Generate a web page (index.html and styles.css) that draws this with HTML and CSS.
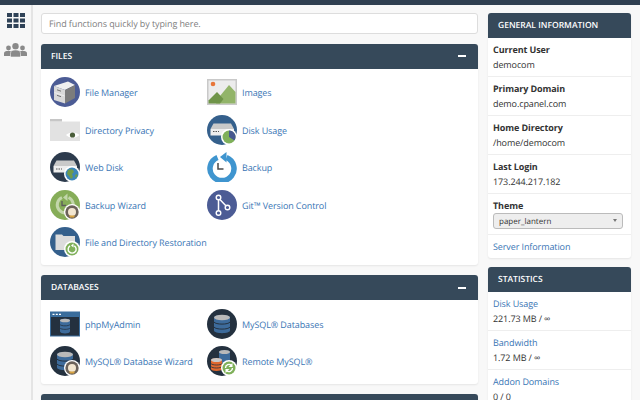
FILE: index.html
```html
<!DOCTYPE html>
<html>
<head>
    <title>cPanel</title>
    <link rel="stylesheet" href="styles.css">
</head>
<body>
    <div class="top-bar"></div>
    <div class="page">
        <div class="side-nav">
            <svg class="nav-icon" width="18" height="15" viewBox="0 0 18 15" fill="#2f4257">
                <rect x="0" y="0" width="5" height="4"/><rect x="6.5" y="0" width="5" height="4"/><rect x="13" y="0" width="5" height="4"/>
                <rect x="0" y="5.5" width="5" height="4"/><rect x="6.5" y="5.5" width="5" height="4"/><rect x="13" y="5.5" width="5" height="4"/>
                <rect x="0" y="11" width="5" height="4"/><rect x="6.5" y="11" width="5" height="4"/><rect x="13" y="11" width="5" height="4"/>
            </svg>
            <svg class="nav-icon" width="23" height="14" viewBox="0 0 23 14" fill="#8a8a8a">
                <circle cx="4.5" cy="5" r="2.4"/><circle cx="18.5" cy="5" r="2.4"/>
                <path d="M0 13v-2.5C0 8.5 1.5 8 4.5 8S9 8.5 9 10.5V13zM14 13v-2.500C14 8.500 15.500 8 18.500 8S23 8.500 23 10.500V13z"/>
                <circle cx="11.500" cy="3.200" r="3.200"/>
                <path d="M6.500 14v-3.500C6.500 7.500 8.500 7 11.500 7s5 .5 5 3.500V14z" stroke="#f7f7f7" stroke-width=".6"/>
            </svg>
        </div>
        <div class="content">
            <div class="main-col">
                <div class="search-box">Find functions quickly by typing here.</div>

                <div class="panel">
                    <div class="panel-header">
                        <span>FILES</span>
                        <span class="collapse-mark"></span>
                    </div>
                    <div class="item-grid">
                        <a class="item">
                            <svg class="icon" viewBox="0 0 30 30">
                                <circle cx="15" cy="15" r="15" fill="#4c5c95"/>
                                <path d="M4 9 18 4.500l7 3.500-10 5z" fill="#f0f0f0"/>
                                <path d="M4 9l11 4v13.500L4 23z" fill="#d9d9d9"/>
                                <path d="M15 13l10-5v13l-10 5.500z" fill="#7c7c7c"/>
                                <path d="M4.500 15.500l10 3.500" stroke="#f4f4f4" stroke-width=".8"/>
                                <path d="M7 12.800l4 1.400M7 18.300l4 1.400" stroke="#666" stroke-width=".9"/>
                            </svg>
                            <span class="item-label">File Manager</span>
                        </a>
                        <a class="item">
                            <svg class="icon" viewBox="0 0 30 30">
                                <rect width="30" height="26" y="2" fill="#c9c9c9"/>
                                <rect x="1.500" y="3.500" width="27" height="23" fill="#ececec"/>
                                <circle cx="6" cy="7" r="2.300" fill="#e8763a"/>
                                <path d="M9 26.500H28.500V15L22 8l-9 11z" fill="#92b469"/>
                                <path d="M1.500 26.500v-3L10 15l6.500 7-3.500 4.500z" fill="#6f9449"/>
                            </svg>
                            <span class="item-label">Images</span>
                        </a>
                        <a class="item">
                            <svg class="icon" viewBox="0 0 30 30">
                                <path d="M0 6.500H30V26H0z" fill="#e2e2e2"/>
                                <path d="M0 4H12V6.500H0z" fill="#c6c6c6"/>
                                <path d="M16 20c3-3.400 10.500-3.400 13.500 0-3 3.400-10.500 3.400-13.500 0z" fill="#fff"/>
                                <circle cx="22.500" cy="20" r="2.600" fill="#4a5d3a"/>
                            </svg>
                            <span class="item-label">Directory Privacy</span>
                        </a>
                        <a class="item">
                            <svg class="icon" viewBox="0 0 30 30">
                                <circle cx="15" cy="15" r="15" fill="#35608c"/>
                                <path d="M6.500 8.500H24L27 14H3.500z" fill="#c9c9c9"/>
                                <rect x="3.500" y="14" width="23.500" height="6.500" fill="#eee"/>
                                <path d="M6 16.500h6" stroke="#555" stroke-width="1.200" stroke-dasharray="1.500 1"/>
                                <circle cx="22" cy="22" r="8" fill="#fff"/>
                                <circle cx="22" cy="22" r="6.500" fill="#7fb05a"/>
                                <path d="M22 22v-6.500a6.500 6.500 0 0 1 5.500 10z" fill="#46598f"/>
                            </svg>
                            <span class="item-label">Disk Usage</span>
                        </a>
                        <a class="item">
                            <svg class="icon" viewBox="0 0 30 30">
                                <circle cx="15" cy="15" r="15" fill="#2d3b4d"/>
                                <path d="M6.500 8.500H24L27 14H3.500z" fill="#c9c9c9"/>
                                <rect x="3.500" y="14" width="23.500" height="6.500" fill="#eee"/>
                                <path d="M6 17h6" stroke="#555" stroke-width="1.200" stroke-dasharray="1.500 1"/>
                                <circle cx="22" cy="22" r="8" fill="#fff"/>
                                <circle cx="22" cy="22" r="6.500" fill="#3c86b8"/>
                                <path d="M18 18c2-1 4-1 5 0l1 2-2 2 1 3-2 2-2-3-2-2z" fill="#6f9a4a"/>
                                <path d="M25 23l2-1 .5 2-2 2z" fill="#6f9a4a"/>
                            </svg>
                            <span class="item-label">Web Disk</span>
                        </a>
                        <a class="item">
                            <svg class="icon" viewBox="0 0 30 30">
                                <path d="M10.500 5.500A12 12 0 1 0 19.500 5.500" fill="none" stroke="#3f95cf" stroke-width="5.500"/>
                                <path d="M19.500 0v10.500l-6.500-5.500z" fill="#3f95cf"/>
                                <path d="M11 11v6h5.500" fill="none" stroke="#4a4a4a" stroke-width="1.500"/>
                            </svg>
                            <span class="item-label">Backup</span>
                        </a>
                        <a class="item">
                            <svg class="icon" viewBox="0 0 30 30">
                                <circle cx="15" cy="15" r="15" fill="#86ad58"/>
                                <path d="M12 7.500a8 8 0 1 0 6.500 0" fill="none" stroke="#c2d6aa" stroke-width="3"/>
                                <path d="M17.500 3.500v7.500l-4.500-3.500z" fill="#c2d6aa"/>
                                <path d="M12 11v4.500h4" fill="none" stroke="#5b5b5b" stroke-width="1.300"/>
                                <circle cx="22" cy="22" r="8" fill="#fff"/>
                                <circle cx="22" cy="22" r="6.700" fill="#6b625a"/>
                                <circle cx="22" cy="22" r="4" fill="#f2e6d0"/>
                                <path d="M19 25.500h6l-1 2h-4z" fill="#d9a441"/>
                            </svg>
                            <span class="item-label">Backup Wizard</span>
                        </a>
                        <a class="item">
                            <svg class="icon" viewBox="0 0 30 30">
                                <circle cx="15" cy="15" r="15" fill="#4c5c95"/>
                                <path d="M11.500 7.500v15M11.500 8l9 9.500" stroke="#fff" stroke-width="1.500" fill="none"/>
                                <circle cx="11.500" cy="7.500" r="2.300" fill="#4c5c95" stroke="#fff" stroke-width="1.400"/>
                                <circle cx="20.500" cy="17.500" r="2.300" fill="#4c5c95" stroke="#fff" stroke-width="1.400"/>
                                <circle cx="11.500" cy="23" r="2.300" fill="#4c5c95" stroke="#fff" stroke-width="1.400"/>
                            </svg>
                            <span class="item-label">Git&trade; Version Control</span>
                        </a>
                        <a class="item">
                            <svg class="icon" viewBox="0 0 30 30">
                                <circle cx="15" cy="15" r="15" fill="#35608c"/>
                                <path d="M5.500 7.500H12l1.500 1.500H25v14H5.500z" fill="#dcdcdc"/>
                                <circle cx="22" cy="22" r="8" fill="#fff"/>
                                <circle cx="22" cy="22" r="6.500" fill="#7fb05a"/>
                                <path d="M20 18.800a4 4 0 1 0 4.300 0" fill="none" stroke="#fff" stroke-width="1.400"/>
                                <path d="M23.500 16.500v4l-2.500-2z" fill="#fff"/>
                            </svg>
                            <span class="item-label">File and Directory Restoration</span>
                        </a>
                    </div>
                </div>

                <div class="panel">
                    <div class="panel-header">
                        <span>DATABASES</span>
                        <span class="collapse-mark"></span>
                    </div>
                    <div class="item-grid">
                        <a class="item">
                            <svg class="icon" viewBox="0 0 30 30">
                                <rect y="2.500" width="30" height="25" fill="#3a6d9c"/>
                                <rect x="1" y="8" width="28" height="18.500" fill="#24313f"/>
                                <path d="M2.500 5.300h2M5.800 5.300h2M9 5.300h2" stroke="#fff" stroke-width="1.300"/>
                                <path d="M10 11.500c0-2.500 10-2.500 10 0v11c0 2.500-10 2.500-10 0z" fill="#3d6b9b"/>
                                <ellipse cx="15" cy="11.500" rx="5" ry="1.800" fill="#b9b9b9"/>
                                <path d="M10 15.500c1 1.800 9 1.800 10 0M10 19c1 1.800 9 1.800 10 0" stroke="#24313f" stroke-width=".8" fill="none"/>
                            </svg>
                            <span class="item-label">phpMyAdmin</span>
                        </a>
                        <a class="item">
                            <svg class="icon" viewBox="0 0 30 30">
                                <circle cx="15" cy="15" r="15" fill="#24313f"/>
                                <path d="M7 8.500c0-3.500 16-3.500 16 0v13c0 3.500-16 3.500-16 0z" fill="#3d6b9b"/>
                                <ellipse cx="15" cy="8.500" rx="8" ry="2.800" fill="#b9b9b9"/>
                                <path d="M7 13c1.500 2.800 14.500 2.800 16 0M7 18c1.500 2.800 14.500 2.800 16 0" stroke="#24313f" stroke-width="1" fill="none"/>
                            </svg>
                            <span class="item-label">MySQL&reg; Databases</span>
                        </a>
                        <a class="item">
                            <svg class="icon" viewBox="0 0 30 30">
                                <circle cx="15" cy="15" r="15" fill="#24313f"/>
                                <path d="M7 8.500c0-3.500 16-3.500 16 0v13c0 3.500-16 3.500-16 0z" fill="#3d6b9b"/>
                                <ellipse cx="15" cy="8.500" rx="8" ry="2.800" fill="#b9b9b9"/>
                                <path d="M7 13c1.500 2.800 14.500 2.800 16 0M7 18c1.500 2.800 14.500 2.800 16 0" stroke="#24313f" stroke-width="1" fill="none"/>
                                <circle cx="22" cy="22" r="8" fill="#fff"/>
                                <circle cx="22" cy="22" r="6.700" fill="#6b625a"/>
                                <circle cx="22" cy="22" r="4" fill="#f2e6d0"/>
                                <path d="M19 25.500h6l-1 2h-4z" fill="#d9a441"/>
                            </svg>
                            <span class="item-label">MySQL&reg; Database Wizard</span>
                        </a>
                        <a class="item">
                            <svg class="icon" viewBox="0 0 30 30">
                                <circle cx="15" cy="15" r="15" fill="#24313f"/>
                                <path d="M12 6c0-2.500 11-2.500 11 0v9c0 2.500-11 2.500-11 0z" fill="#3d6b9b"/>
                                <ellipse cx="17.500" cy="6" rx="5.500" ry="2" fill="#b9b9b9"/>
                                <path d="M4 14c0-2.500 11-2.500 11 0v9c0 2.500-11 2.500-11 0z" fill="#e0692f"/>
                                <ellipse cx="9.500" cy="14" rx="5.500" ry="2" fill="#c9c9c9"/>
                                <path d="M4 17.500c1 2 10 2 11 0M4 20.500c1 2 10 2 11 0" stroke="#24313f" stroke-width=".8" fill="none"/>
                                <circle cx="22" cy="22" r="8" fill="#fff"/>
                                <circle cx="22" cy="22" r="6.500" fill="#7fb05a"/>
                                <path d="M18.500 22a3.500 3.500 0 0 1 6-2.500M25.500 22a3.500 3.500 0 0 1-6 2.500" fill="none" stroke="#fff" stroke-width="1.400"/>
                                <path d="M25.500 17v4h-4zM18.500 27v-4h4z" fill="#fff"/>
                            </svg>
                            <span class="item-label">Remote MySQL&reg;</span>
                        </a>
                    </div>
                </div>

                <div class="panel">
                    <div class="panel-header"></div>
                </div>
            </div>

            <div class="side-col">
                <div class="info-panel">
                    <div class="info-header">GENERAL INFORMATION</div>
                    <div class="info-row">
                        <div class="info-label">Current User</div>
                        <div class="info-value">democom</div>
                    </div>
                    <div class="info-row">
                        <div class="info-label">Primary Domain</div>
                        <div class="info-value">demo.cpanel.com</div>
                    </div>
                    <div class="info-row">
                        <div class="info-label">Home Directory</div>
                        <div class="info-value">/home/democom</div>
                    </div>
                    <div class="info-row">
                        <div class="info-label">Last Login</div>
                        <div class="info-value">173.244.217.182</div>
                    </div>
                    <div class="info-row theme-row">
                        <div class="info-label">Theme</div>
                        <div class="theme-select">paper_lantern<span class="select-arrow"></span></div>
                    </div>
                    <div class="info-row link-row"><a class="info-link">Server Information</a></div>
                </div>

                <div class="info-panel">
                    <div class="info-header">STATISTICS</div>
                    <div class="info-row">
                        <a class="info-link">Disk Usage</a>
                        <div class="info-value">221.73 MB / &infin;</div>
                    </div>
                    <div class="info-row">
                        <a class="info-link">Bandwidth</a>
                        <div class="info-value">1.72 MB / &infin;</div>
                    </div>
                    <div class="info-row">
                        <a class="info-link">Addon Domains</a>
                        <div class="info-value">0 / 0</div>
                    </div>
                </div>
            </div>
        </div>
    </div>
</body>
</html>
```

FILE: styles.css
```css
html, body {
    height: 100%;
}

body {
    font-family: "Open Sans", Arial, sans-serif;
    font-size: 9px;
    letter-spacing: -0.1px;
    margin: 0;
    padding: 0;
    background-color: #f8f8f8;
    color: #333;
    overflow: hidden;
    text-rendering: geometricPrecision;
}

.top-bar {
    height: 5px;
    background-color: #2f3f50;
}

.page {
    display: flex;
    height: 395px;
    overflow: hidden;
}

/* Left icon strip */
.side-nav {
    width: 31px;
    flex-shrink: 0;
    border-right: 2px solid #e4e4e4;
    display: flex;
    flex-direction: column;
    align-items: center;
    padding-top: 8px;
    gap: 15px;
    background-color: #f7f7f7;
}

.nav-icon {
    display: block;
}

.content {
    display: flex;
    align-items: flex-start;
    gap: 10px;
    padding: 8px 0 0 8px;
}

.main-col {
    width: 437px;
}

.search-box {
    box-sizing: border-box;
    height: 21px;
    line-height: 20px;
    padding-left: 7px;
    margin-bottom: 9.5px;
    background-color: #fff;
    border: 1px solid #ddd;
    border-radius: 3px;
    color: #808080;
}

.panel {
    background-color: #fff;
    border-radius: 3px;
    box-shadow: 0 1px 2px rgba(0, 0, 0, 0.08);
    margin-bottom: 10px;
}

.panel-header {
    height: 25px;
    padding: 0 12px 0 10px;
    background-color: #36495a;
    border-radius: 3px 3px 0 0;
    color: #fff;
    font-size: 8.5px;
    letter-spacing: 0;
    font-weight: 600;
    display: flex;
    align-items: center;
    justify-content: space-between;
}

.collapse-mark {
    width: 8px;
    height: 2px;
    background-color: #fff;
}

.item-grid {
    display: grid;
    grid-template-columns: 157px 1fr;
    grid-auto-rows: 37.5px;
    padding: 5px 9px 4px;
}

.item {
    display: flex;
    align-items: center;
    gap: 5px;
    color: #3a76b5;
    white-space: nowrap;
}

.item-label {
    padding-top: 1px;
}

.icon {
    width: 30px;
    height: 30px;
    flex-shrink: 0;
}

/* Right column */
.side-col {
    width: 143px;
}

.info-panel {
    background-color: #fff;
    border-radius: 3px;
    box-shadow: 0 1px 2px rgba(0, 0, 0, 0.08);
    margin-bottom: 9px;
}

.info-header {
    height: 25px;
    line-height: 25px;
    padding-left: 10px;
    background-color: #36495a;
    border-radius: 3px 3px 0 0;
    color: #fff;
    font-size: 8.5px;
    letter-spacing: 0;
    font-weight: 600;
}

.info-row {
    padding: 3.5px 5px;
    border-bottom: 1px solid #eee;
    line-height: 15.5px;
}

.info-label {
    font-weight: 700;
}

.link-row {
    padding: 4px 5px;
    border-bottom: none;
}

.info-link {
    color: #3a76b5;
}

.theme-row {
    padding-bottom: 4.5px;
}

.theme-select {
    position: relative;
    box-sizing: border-box;
    height: 16px;
    line-height: 15px;
    width: 130px;
    padding-left: 5px;
    background-color: #eee;
    border: 1px solid #bbb;
    border-radius: 3px;
    font-size: 8px;
    letter-spacing: 0;
}

.select-arrow {
    position: absolute;
    right: 5px;
    top: 5px;
    border-left: 2px solid transparent;
    border-right: 2px solid transparent;
    border-top: 3px solid #777;
}
```
